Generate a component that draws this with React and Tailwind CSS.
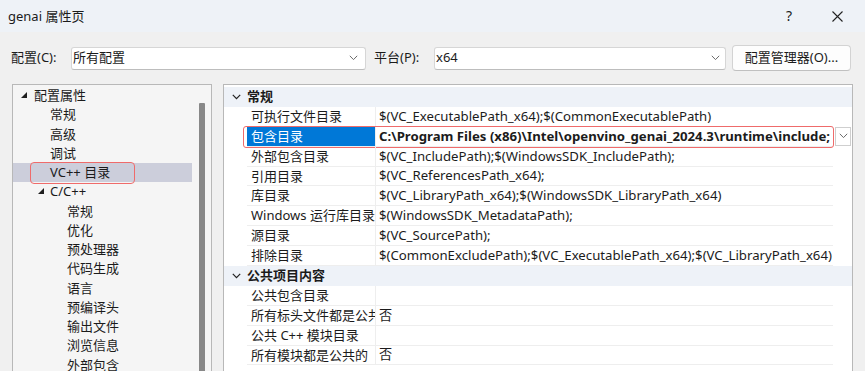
import React from "react";

const FONT = { fontFamily: '"Noto Sans", "Noto Sans CJK SC", sans-serif' };

function Chevron({ className = "" }) {
  return (
    <svg width="9" height="6" viewBox="0 0 9 6" className={className}>
      <path d="M0.8 0.8 L4.5 4.6 L8.2 0.8" fill="none" stroke="#6b6b6b" strokeWidth="1" />
    </svg>
  );
}

function Tri() {
  return (
    <svg width="6" height="6" viewBox="0 0 6 6">
      <polygon points="6,0 6,6 0,6" fill="#1e1e1e" />
    </svg>
  );
}

const tree = [
  { t: "配置属性", lvl: 0, tri: true },
  { t: "常规", lvl: 1 },
  { t: "高级", lvl: 1 },
  { t: "调试", lvl: 1 },
  { t: "VC++ 目录", lvl: 1, sel: true },
  { t: "C/C++", lvl: 1, tri: true },
  { t: "常规", lvl: 2 },
  { t: "优化", lvl: 2 },
  { t: "预处理器", lvl: 2 },
  { t: "代码生成", lvl: 2 },
  { t: "语言", lvl: 2 },
  { t: "预编译头", lvl: 2 },
  { t: "输出文件", lvl: 2 },
  { t: "浏览信息", lvl: 2 },
  { t: "外部包含", lvl: 2 },
];

const grid = [
  { h: "常规" },
  { l: "可执行文件目录", v: "$(VC_ExecutablePath_x64);$(CommonExecutablePath)" },
  { l: "包含目录", v: "C:\\Program Files (x86)\\Intel\\openvino_genai_2024.3\\runtime\\include;", sel: true },
  { l: "外部包含目录", v: "$(VC_IncludePath);$(WindowsSDK_IncludePath);" },
  { l: "引用目录", v: "$(VC_ReferencesPath_x64);" },
  { l: "库目录", v: "$(VC_LibraryPath_x64);$(WindowsSDK_LibraryPath_x64)" },
  { l: "Windows 运行库目录", v: "$(WindowsSDK_MetadataPath);" },
  { l: "源目录", v: "$(VC_SourcePath);" },
  { l: "排除目录", v: "$(CommonExcludePath);$(VC_ExecutablePath_x64);$(VC_LibraryPath_x64)" },
  { h: "公共项目内容" },
  { l: "公共包含目录", v: "" },
  { l: "所有标头文件都是公共的", v: "否" },
  { l: "公共 C++ 模块目录", v: "" },
  { l: "所有模块都是公共的", v: "否" },
];

export default function App() {
  return (
    <div
      className="w-[865px] h-[371px] overflow-hidden bg-[#f0f0f0] flex flex-col text-[13px] text-[#1b1b1b]"
      style={FONT}
    >
      {/* title bar */}
      <div className="h-[32px] shrink-0 bg-[#eef2f7] flex items-center pl-[8px]">
        <span className="leading-none">genai 属性页</span>
        <div className="ml-auto flex items-center">
          <span className="text-[14px] leading-none mr-[40px]">?</span>
          <svg width="11" height="11" viewBox="0 0 11 11" className="mr-[22px]">
            <path d="M0.5 0.5 L10.5 10.5 M10.5 0.5 L0.5 10.5" stroke="#222" strokeWidth="1.1" />
          </svg>
        </div>
      </div>

      {/* toolbar */}
      <div className="h-[52px] shrink-0 flex items-center pl-[11px]">
        <span className="w-[60px]">配置(C):</span>
        <div className="w-[295px] h-[23px] bg-white border border-[#d6d6d6] border-b-[#bdbdbd] rounded-[3px] flex items-center pl-[1px] pr-[7px]">
          <span>所有配置</span>
          <Chevron className="ml-auto" />
        </div>
        <span className="ml-[8px] w-[60px]">平台(P):</span>
        <div className="w-[292px] h-[23px] bg-white border border-[#d6d6d6] border-b-[#bdbdbd] rounded-[3px] flex items-center pl-[1px] pr-[5px]">
          <span>x64</span>
          <Chevron className="ml-auto" />
        </div>
        <div className="ml-[6px] w-[119px] h-[26px] bg-[#fdfdfd] border border-[#d3d3d3] border-b-[#c0c0c0] rounded-[4px] flex items-center justify-center">
          配置管理器(O)...
        </div>
      </div>

      {/* main */}
      <div className="flex flex-1 min-h-0 pl-[12px]">
        {/* tree */}
        <div className="w-[200px] border border-[#b8b8b8] border-b-0 bg-[#f5f5f5] flex">
          <div className="flex-1 pt-[1px]">
            {tree.map((it, i) => (
              <div
                key={i}
                className={`h-[19.25px] flex items-center relative ${it.sel ? "bg-[#cccedb]" : ""}`}
              >
                <div
                  className={`flex items-center ${
                    it.lvl === 0 ? "pl-[8px]" : it.lvl === 1 ? (it.tri ? "pl-[25px]" : "pl-[24px]") : "pl-[41px]"
                  }`}
                >
                  {it.tri ? (
                    <span className={`${it.lvl === 0 ? "w-[13px]" : "w-[12px]"} flex items-center -mt-[2px]`}>
                      <Tri />
                    </span>
                  ) : (
                    <span className="w-[13px]" />
                  )}
                  <span className="leading-none whitespace-nowrap">{it.t}</span>
                </div>
                {it.sel && (
                  <div className="absolute left-[17px] top-[-1px] w-[105px] h-[22px] border-[1.5px] border-[#ef6b6b] rounded-[4px]" />
                )}
              </div>
            ))}
          </div>
          <div className="w-[19px] shrink-0 pt-[18px] flex justify-center pl-[1px]">
            <div className="w-[6px] h-[400px] bg-[#888888] rounded-[1px]" />
          </div>
        </div>

        {/* property grid */}
        <div className="ml-[11px] w-[630px] border border-[#b8b8b8] border-b-0 bg-white pt-[2px]">
          {grid.map((r, i) =>
            r.h ? (
              <div key={i} className="h-[19.9px] bg-[#eef2f8] flex items-center">
                <span className="w-[23px] flex justify-center pl-[1px]">
                  <svg width="9" height="6" viewBox="0 0 9 6">
                    <path d="M0.8 0.8 L4.5 4.6 L8.2 0.8" fill="none" stroke="#222" strokeWidth="1.2" />
                  </svg>
                </span>
                <span className="font-bold leading-none">{r.h}</span>
              </div>
            ) : (
              <div key={i} className="h-[19.9px] flex relative">
                <div className="w-[23px] shrink-0" />
                <div
                  className={`w-[129px] shrink-0 border-b border-r border-[#eeeeee] flex items-center pl-[4px] overflow-hidden ${
                    r.sel ? "bg-[#0078d7] text-white" : ""
                  }`}
                >
                  <span className="leading-none whitespace-nowrap">{r.l}</span>
                </div>
                <div className="w-[457px] shrink-0 border-b border-[#eeeeee] flex items-center pl-[3px] overflow-hidden">
                  <span className={`leading-none whitespace-nowrap text-[13.2px] ${r.sel ? "font-bold" : ""}`}>{r.v}</span>
                </div>
                {r.sel && (
                  <>
                    <div className="ml-[2px] w-[16px] h-[19px] border border-[#cfcfcf] bg-white flex items-center justify-center">
                      <Chevron />
                    </div>
                    <div className="absolute left-[19px] top-[-1px] w-[591px] h-[22px] border-[1.5px] border-[#ef6b6b] rounded-[3px]" />
                  </>
                )}
              </div>
            )
          )}
        </div>
      </div>
    </div>
  );
}
